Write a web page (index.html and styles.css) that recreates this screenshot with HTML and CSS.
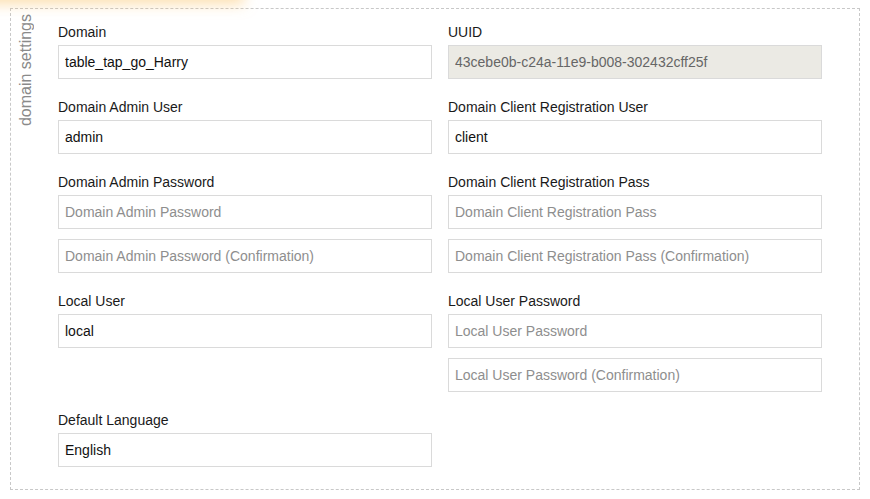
FILE: index.html
```html
<!DOCTYPE html>
<html>
<head>
<meta charset="utf-8">
<link rel="stylesheet" href="styles.css">
</head>
<body>
<div class="glow"></div>
<div class="panel">
  <div class="legend">domain settings</div>
  <div class="grid">
    <div class="group">
      <label class="lbl">Domain</label>
      <input class="inp" type="text" value="table_tap_go_Harry">
    </div>
    <div class="group">
      <label class="lbl">UUID</label>
      <input class="inp disabled" type="text" value="43cebe0b-c24a-11e9-b008-302432cff25f" disabled>
    </div>
    <div class="group">
      <label class="lbl">Domain Admin User</label>
      <input class="inp" type="text" value="admin">
    </div>
    <div class="group">
      <label class="lbl">Domain Client Registration User</label>
      <input class="inp" type="text" value="client">
    </div>
    <div class="group">
      <label class="lbl">Domain Admin Password</label>
      <input class="inp" type="password" placeholder="Domain Admin Password">
      <input class="inp second" type="password" placeholder="Domain Admin Password (Confirmation)">
    </div>
    <div class="group">
      <label class="lbl">Domain Client Registration Pass</label>
      <input class="inp" type="password" placeholder="Domain Client Registration Pass">
      <input class="inp second" type="password" placeholder="Domain Client Registration Pass (Confirmation)">
    </div>
    <div class="group">
      <label class="lbl">Local User</label>
      <input class="inp" type="text" value="local">
    </div>
    <div class="group">
      <label class="lbl">Local User Password</label>
      <input class="inp" type="password" placeholder="Local User Password">
      <input class="inp second" type="password" placeholder="Local User Password (Confirmation)">
    </div>
    <div class="group">
      <label class="lbl">Default Language</label>
      <input class="inp" type="text" value="English">
    </div>
  </div>
</div>
</body>
</html>
```

FILE: styles.css
```css
html, body {
  margin: 0;
  padding: 0;
  background: #fff;
}
body {
  font-family: "Liberation Sans", Arial, sans-serif;
  font-size: 14px;
  color: #222;
  position: relative;
  overflow: hidden;
  width: 870px;
  height: 499px;
}
.glow {
  position: absolute;
  left: -30px;
  top: -20px;
  width: 270px;
  height: 20px;
  box-shadow: 0 0 14px 4px rgba(252, 196, 110, 0.55);
  background: rgba(252, 196, 110, 0.55);
}
.panel {
  box-sizing: border-box;
  width: 850px;
  margin: 8px 10px 0 10px;
  border: 1px dashed #c8c8c8;
  padding: 5px 0 22px 0;
  display: flex;
  align-items: flex-start;
}
.legend {
  writing-mode: vertical-rl;
  transform: rotate(180deg);
  text-align: end;
  font-size: 16px;
  line-height: 16px;
  color: #8a8a8a;
  margin: 0 24px 0 7px;
  flex: none;
  white-space: nowrap;
}
.grid {
  display: grid;
  grid-template-columns: 374px 374px;
  column-gap: 16px;
  row-gap: 18px;
  padding-top: 8px;
}
.group {
  display: flex;
  flex-direction: column;
}
.lbl {
  display: block;
  line-height: 20px;
  margin-bottom: 3px;
  color: #1a1a1a;
}
.inp {
  box-sizing: border-box;
  width: 374px;
  height: 34px;
  margin: 0;
  border: 1px solid #dadada;
  border-radius: 0;
  padding: 0 6px;
  font-family: "Liberation Sans", Arial, sans-serif;
  font-size: 14px;
  color: #111;
  background: #fff;
  outline: none;
}
.inp::placeholder {
  color: #8e8e8e;
}
.inp.second {
  margin-top: 10px;
}
.inp.disabled {
  background: #ebeae4;
  color: #666;
  -webkit-text-fill-color: #666;
  opacity: 1;
}
```
